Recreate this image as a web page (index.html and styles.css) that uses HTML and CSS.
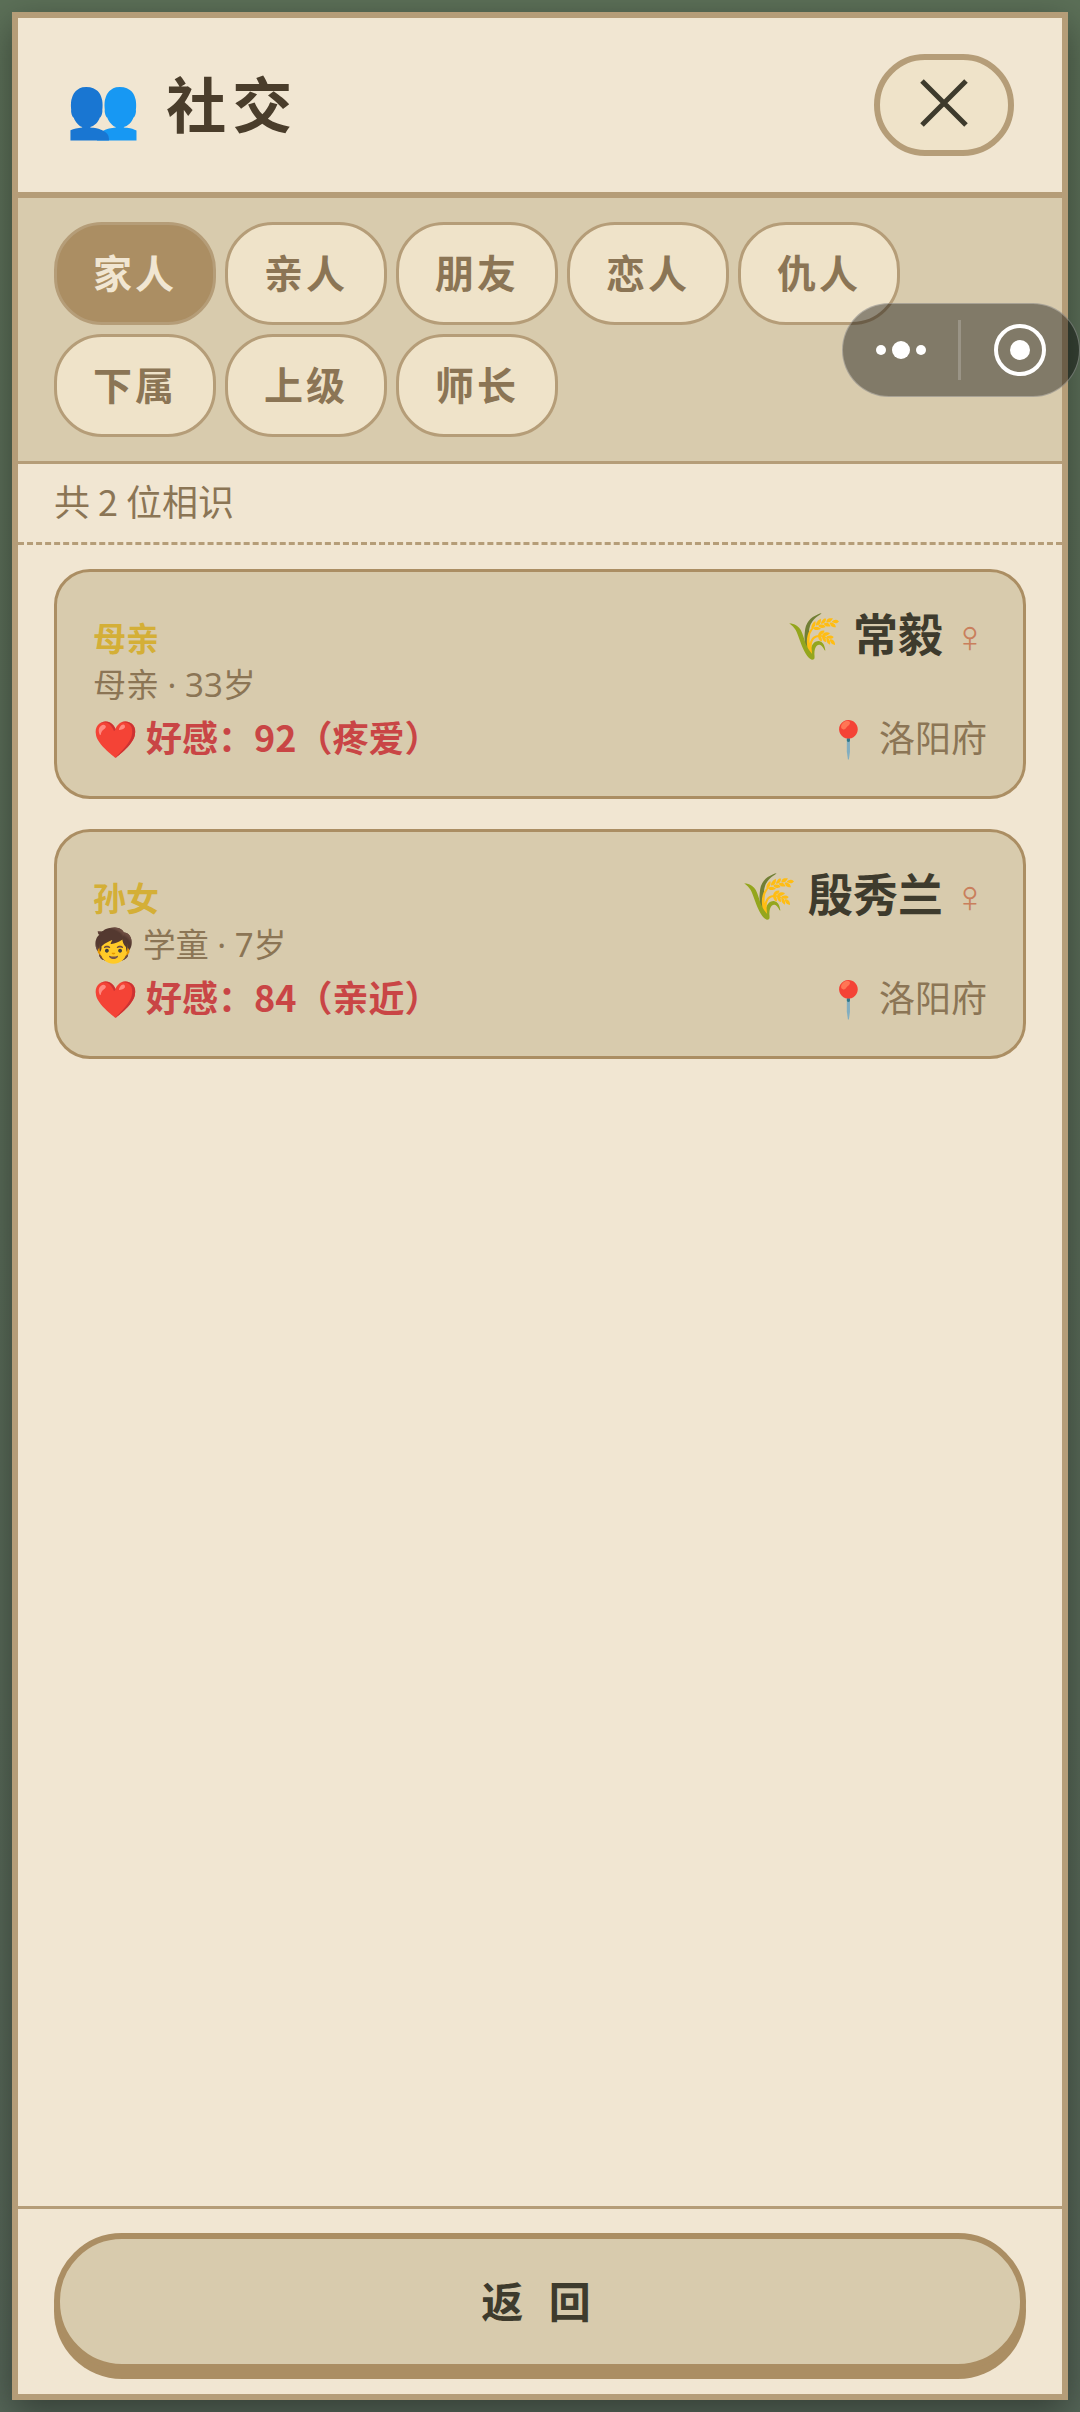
FILE: index.html
```html
<!DOCTYPE html>
<html lang="zh-CN">
<head>
<meta charset="utf-8">
<meta name="viewport" content="width=device-width, initial-scale=1">
<title>社交</title>
<link rel="stylesheet" href="styles.css">
</head>
<body>
<main class="panel">
  <header class="panel-header">
    <h1 class="title"><span class="emoji">👥</span> 社交</h1>
    <button class="close" type="button" aria-label="关闭">
      <svg class="close-icon" viewBox="0 0 48 48" aria-hidden="true"><path d="M2 2 46 46M46 2 2 46"/></svg>
    </button>
  </header>

  <nav class="tabs" aria-label="关系">
    <button class="tab tab-active" type="button">家人</button>
    <button class="tab" type="button">亲人</button>
    <button class="tab" type="button">朋友</button>
    <button class="tab" type="button">恋人</button>
    <button class="tab" type="button">仇人</button>
    <button class="tab" type="button">下属</button>
    <button class="tab" type="button">上级</button>
    <button class="tab" type="button">师长</button>
  </nav>

  <p class="count">共 2 位相识</p>

  <section class="list">
    <article class="card">
      <div class="card-top">
        <div class="relation">
          <p class="tag">母亲</p>
          <p class="detail">母亲 · 33岁</p>
        </div>
        <h2 class="name"><span class="emoji">🌾</span> 常毅 <span class="gender">♀</span></h2>
      </div>
      <div class="card-bottom">
        <p class="favor"><span class="emoji">❤️</span> 好感：92（疼爱）</p>
        <p class="place"><span class="emoji">📍</span> 洛阳府</p>
      </div>
    </article>
    <article class="card">
      <div class="card-top">
        <div class="relation">
          <p class="tag">孙女</p>
          <p class="detail"><span class="emoji">🧒</span> 学童 · 7岁</p>
        </div>
        <h2 class="name"><span class="emoji">🌾</span> 殷秀兰 <span class="gender">♀</span></h2>
      </div>
      <div class="card-bottom">
        <p class="favor"><span class="emoji">❤️</span> 好感：84（亲近）</p>
        <p class="place"><span class="emoji">📍</span> 洛阳府</p>
      </div>
    </article>
  </section>

  <footer class="panel-footer">
    <button class="back" type="button">返 回</button>
  </footer>
</main>

<div class="capsule">
  <button class="capsule-button capsule-more" type="button" aria-label="更多">
    <svg class="dots-icon" viewBox="0 0 52 20" aria-hidden="true"><circle cx="6" cy="10" r="5"/><circle cx="26" cy="10" r="9"/><circle cx="46" cy="10" r="5"/></svg>
  </button>
  <span class="capsule-divider"></span>
  <button class="capsule-button capsule-exit" type="button" aria-label="退出">
    <svg class="ring-icon" viewBox="0 0 52 52" aria-hidden="true"><circle class="ring" cx="26" cy="26" r="24"/><circle cx="26" cy="26" r="10"/></svg>
  </button>
</div>
</body>
</html>
```
FILE: styles.css
```css
:root {
  --paper: #f1e6d2;
  --cream: #efe3c9;
  --sand: #d8cbad;
  --line: #b59d78;
  --bronze: #ab8e63;
  --brown: #8b7555;
  --ink: #3e3b2d;
}

* {
  box-sizing: border-box;
}

body {
  display: flex;
  min-height: 100vh;
  margin: 0;
  padding: 12px;
  background: linear-gradient(#5c7058, #566658);
  color: var(--ink);
  font-family: "Noto Sans CJK SC", sans-serif;
}

h1, h2, p {
  margin: 0;
}

button {
  font-family: inherit;
  cursor: pointer;
}

.emoji {
  font-family: "Noto Color Emoji", sans-serif;
  font-weight: 400;
  line-height: 1;
}

.panel {
  display: flex;
  flex: 1;
  flex-direction: column;
  border: 6px solid var(--line);
  background: var(--paper);
  box-shadow: 0 12px 36px rgba(0, 0, 0, 0.4);
}

.panel-header {
  display: flex;
  align-items: center;
  justify-content: space-between;
  padding: 36px 48px;
  border-bottom: 6px solid var(--line);
}

.title {
  padding-bottom: 6px;
  color: #4a3d2b;
  font-size: 60px;
  line-height: 84px;
  letter-spacing: 6px;
}

.close {
  display: grid;
  place-items: center;
  width: 140px;
  height: 102px;
  padding: 0 0 4px;
  border: 6px solid var(--line);
  border-radius: 51px;
  background: var(--cream);
}

.close-icon {
  width: 48px;
  height: 48px;
  fill: none;
  stroke: var(--ink);
  stroke-width: 5;
}

.tabs {
  display: flex;
  flex-wrap: wrap;
  gap: 9px;
  padding: 24px 36px;
  border-bottom: 3px solid var(--line);
  background: var(--sand);
}

.tab {
  height: 103px;
  padding: 0 36px 6px;
  border: 3px solid var(--line);
  border-radius: 48px;
  background: var(--cream);
  color: var(--brown);
  font-size: 39px;
  font-weight: 700;
  letter-spacing: 3px;
}

.tab-active {
  background: var(--bronze);
  color: var(--paper);
}

.count {
  padding: 9px 36px 15px;
  border-bottom: 3px dashed var(--line);
  color: var(--brown);
  font-size: 36px;
  line-height: 54px;
}

.list {
  display: flex;
  flex: 1;
  flex-direction: column;
  gap: 30px;
  padding: 24px 36px;
}

.card {
  padding: 29px 36px 33px;
  border: 3px solid var(--bronze);
  border-radius: 36px;
  background: var(--sand);
}

.card-top,
.card-bottom {
  display: flex;
  align-items: flex-start;
  justify-content: space-between;
}

.relation {
  padding: 13px 0 1px;
  font-size: 33px;
  line-height: 47px;
}

.tag {
  color: #d4af37;
  font-weight: 700;
}

.detail {
  color: var(--brown);
  font-family: "Noto Sans", "Noto Sans CJK SC", sans-serif;
}

.name {
  font-size: 45px;
  line-height: 64px;
}

.gender {
  color: #c97f5c;
  font-family: "DejaVu Sans", sans-serif;
  font-weight: 200;
  line-height: 1;
}

.favor,
.place {
  font-size: 36px;
  line-height: 54px;
}

.favor {
  color: #c94545;
  font-weight: 700;
}

.place {
  color: var(--brown);
}

.panel-footer {
  padding: 24px 36px;
  border-top: 3px solid var(--line);
}

.back {
  width: 100%;
  height: 137px;
  padding: 0 0 4px;
  border: 6px solid var(--bronze);
  border-radius: 68px;
  background: var(--sand);
  box-shadow: 0 9px 0 var(--bronze);
  color: var(--ink);
  font-size: 42px;
  font-weight: 700;
  letter-spacing: 8px;
}

.capsule {
  position: absolute;
  top: 303px;
  right: 0;
  display: flex;
  align-items: center;
  width: 238px;
  height: 94px;
  border: 1px solid rgba(255, 255, 255, 0.3);
  border-radius: 47px;
  background: rgba(0, 0, 0, 0.4);
}

.capsule-button {
  display: grid;
  place-items: center;
  padding: 0;
  border: 0;
  background: none;
}

.capsule-more {
  width: 115px;
}

.capsule-exit {
  flex: 1;
}

.capsule-divider {
  width: 3px;
  height: 60px;
  background: rgba(255, 255, 255, 0.2);
}

.dots-icon {
  width: 52px;
  height: 20px;
  fill: #fff;
}

.ring-icon {
  width: 52px;
  height: 52px;
  fill: #fff;
}

.ring {
  fill: none;
  stroke: #fff;
  stroke-width: 4;
}
```
